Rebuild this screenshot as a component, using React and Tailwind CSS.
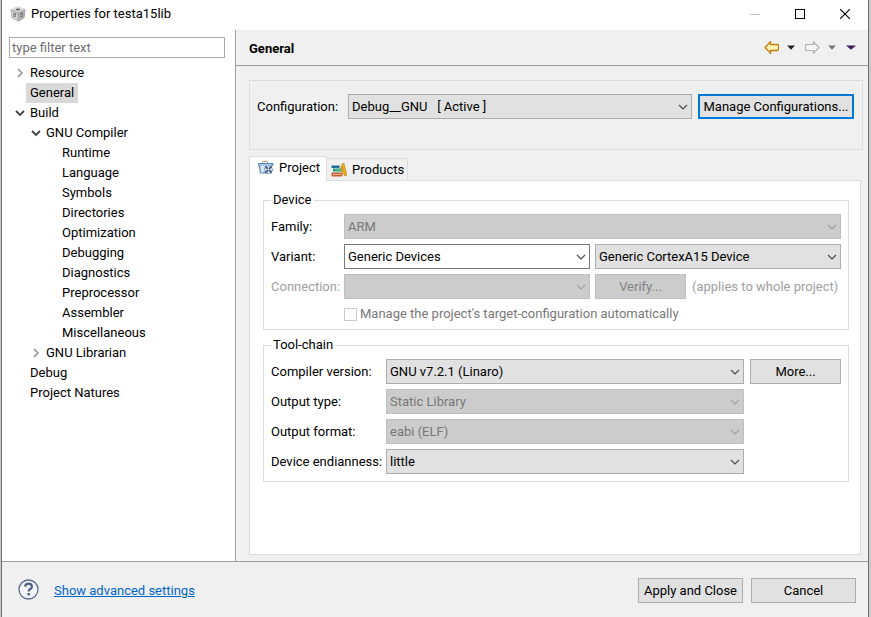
import React, { useState } from 'react';
import clsx from 'clsx';

const tree = [
  { label: 'Resource', level: 0, state: 'closed' },
  { label: 'General', level: 0 },
  { label: 'Build', level: 0, state: 'open' },
  { label: 'GNU Compiler', level: 1, state: 'open' },
  { label: 'Runtime', level: 2 },
  { label: 'Language', level: 2 },
  { label: 'Symbols', level: 2 },
  { label: 'Directories', level: 2 },
  { label: 'Optimization', level: 2 },
  { label: 'Debugging', level: 2 },
  { label: 'Diagnostics', level: 2 },
  { label: 'Preprocessor', level: 2 },
  { label: 'Assembler', level: 2 },
  { label: 'Miscellaneous', level: 2 },
  { label: 'GNU Librarian', level: 1, state: 'closed' },
  { label: 'Debug', level: 0 },
  { label: 'Project Natures', level: 0 },
];

const indents = ['pl-3', 'pl-7', 'pl-11'];

function CubeIcon() {
  return (
    <svg width="16" height="16" viewBox="0 0 16 16" aria-hidden="true">
      <path d="M8 0.5 L15.5 3.5 L14.5 12 L8.5 15.5 L1.5 12 L0.5 3.5 Z" fill="#a2a2a2" />
      <path d="M8 0.5 L15 3.3 L8.3 6.6 L1 3.3 Z" fill="#dedede" />
      <path d="M1 4.3 L7.7 7.4 L8 14.8 L2 11.6 Z" fill="#cdcdcd" />
      <path d="M8.8 7.4 L15 4.3 L14 11.6 L8.9 14.8 Z" fill="#b0b0b0" />
      <ellipse cx="8" cy="3.4" rx="2.4" ry="1" fill="#6a6a6a" />
      <ellipse cx="4.6" cy="9" rx="1.2" ry="2.1" fill="#4a4a4a" />
      <ellipse cx="11.7" cy="9" rx="1.2" ry="2.1" fill="#4a4a4a" />
      <path d="M4 8 L5 10 M11 10 L12.4 8" stroke="#e8e8e8" strokeWidth="0.9" />
    </svg>
  );
}

function ProjectIcon() {
  return (
    <svg width="16" height="14" viewBox="0 0 16 14" aria-hidden="true">
      <path d="M4.5 2.5 V1.2 Q4.5 0.5 5.5 0.5 H8.5 Q9.5 0.5 9.5 1.2 V2.5" fill="none" stroke="#c08a74" />
      <path d="M0.5 2.5 H15 V4.5 H13.5 V12 H2.2 L1.5 4.5 H0.5 Z" fill="#a9cbea" stroke="#5b83b4" />
      <path d="M3 5 H7 L5 11.5 H3.2 Z" fill="#d8e9f8" />
      <circle cx="10.5" cy="8.5" r="4.4" fill="#d3dfec" />
      <circle cx="10.5" cy="8.5" r="3.9" fill="none" stroke="#4d6a8c" strokeWidth="1" strokeDasharray="1.5 1.4" />
      <path d="M7.4 5.4 L13.6 11.6 M13.6 5.4 L7.4 11.6" stroke="#33506f" strokeWidth="1.5" />
      <circle cx="10.5" cy="8.5" r="1" fill="#fff" />
    </svg>
  );
}

function BooksIcon() {
  return (
    <svg width="16" height="14" viewBox="0 0 16 14" aria-hidden="true">
      <rect x="0.5" y="2.5" width="8" height="2.5" fill="#1d6d9c" />
      <rect x="2" y="5.5" width="8.5" height="3" fill="#16966e" />
      <path d="M3.5 7 H10" stroke="#7fd0ac" />
      <rect x="0.5" y="9.5" width="11" height="4" rx="1" fill="#c65c36" />
      <path d="M2 11.5 H10.5" stroke="#f3b595" />
      <path d="M9.4 3 L11.2 2.4 L12.6 12.6 L10.6 9 Z" fill="#d98f10" />
      <path d="M10.8 1 L13 0.4 L15.8 12 L13.6 13 Z" fill="#f2ad1c" stroke="#bd7d0a" strokeWidth="0.6" />
    </svg>
  );
}

function ArrowIcon({ forward }) {
  return (
    <svg width="15" height="13" viewBox="0 0 15 13" aria-hidden="true">
      {forward ? (
        <path d="M14 6.5 L8.5 0.8 V3.5 H1.5 Q0.5 3.5 0.5 4.5 V8.5 Q0.5 9.5 1.5 9.5 H8.5 V12.2 Z" fill="#f5f5f5" stroke="#b2b2b2" strokeWidth="1.2" />
      ) : (
        <path d="M1 6.5 L6.5 0.8 V3.5 H13.5 Q14.5 3.5 14.5 4.5 V8.5 Q14.5 9.5 13.5 9.5 H6.5 V12.2 Z" fill="#fff3b5" stroke="#bd7d12" strokeWidth="1.3" />
      )}
    </svg>
  );
}

function Caret({ className, wide }) {
  return (
    <svg className={className} width={wide ? 10 : 8} height="5" viewBox="0 0 8 5" preserveAspectRatio="none" aria-hidden="true">
      <path d="M0 0.5 H8 L4 4.8 Z" fill="currentColor" />
    </svg>
  );
}

function Twisty({ state }) {
  if (!state) return <span className="w-4" />;
  return (
    <span className="flex w-4 justify-center pr-1">
      {state === 'open' ? (
        <svg width="10" height="10" viewBox="0 0 10 10" aria-hidden="true">
          <path d="M1 3 L5 7 L9 3" fill="none" stroke="#404040" strokeWidth="1.8" />
        </svg>
      ) : (
        <svg width="10" height="10" viewBox="0 0 10 10" aria-hidden="true">
          <path d="M3 1 L7 5 L3 9" fill="none" stroke="#a6a6a6" strokeWidth="1.8" />
        </svg>
      )}
    </span>
  );
}

function Combo({ id, value, label, disabled, editable, className }) {
  return (
    <div className={clsx('relative min-w-0', className)}>
      <select
        id={id}
        aria-label={label}
        disabled={disabled}
        defaultValue={value}
        className={clsx(
          'block h-[25px] w-full appearance-none border pr-6 pl-[3px] whitespace-pre opacity-100 outline-none',
          disabled && 'border-[#bfbfbf] bg-[#cccccc] text-[#787878]',
          !disabled && editable && 'border-[#7a7a7a] bg-white',
          !disabled && !editable && 'border-[#adadad] bg-[#e1e1e1]',
        )}
      >
        <option value={value}>{value}</option>
      </select>
      <svg
        className={clsx('pointer-events-none absolute top-2 right-1', disabled ? 'text-[#a3a3a3]' : 'text-[#4a4a4a]')}
        width="10"
        height="10"
        viewBox="0 0 10 10"
        aria-hidden="true"
      >
        <path d="M1 3 L5 7 L9 3" fill="none" stroke="currentColor" strokeWidth="1.2" />
      </svg>
    </div>
  );
}

function PushButton({ children, className, primary, ...props }) {
  return (
    <button
      type="button"
      className={clsx(
        'h-[25px] shrink-0 bg-[#e1e1e1] text-center whitespace-nowrap disabled:border-[#bfbfbf] disabled:bg-[#cccccc] disabled:text-[#838383]',
        primary ? 'border-2 border-[#0078d7]' : 'border border-[#adadad]',
        className,
      )}
      {...props}
    >
      {children}
    </button>
  );
}

function TitleBar() {
  return (
    <header className="flex h-[30px] items-center bg-white pr-[18px] pb-0.5 pl-2">
      <CubeIcon />
      <h1 className="flex-1 pl-[5px]">Properties for testa15lib</h1>
      <div className="flex items-center gap-[35px]">
        <button type="button" aria-label="Minimize">
          <svg width="10" height="10" viewBox="0 0 10 10">
            <path d="M0 5.5 H10" stroke="#c4c4c4" />
          </svg>
        </button>
        <button type="button" aria-label="Maximize">
          <svg width="10" height="10" viewBox="0 0 10 10">
            <rect x="0.5" y="0.5" width="9" height="9" fill="none" stroke="#000" />
          </svg>
        </button>
        <button type="button" aria-label="Close">
          <svg width="10" height="10" viewBox="0 0 10 10">
            <path d="M0 0 L10 10 M10 0 L0 10" stroke="#000" strokeWidth="1.1" />
          </svg>
        </button>
      </div>
    </header>
  );
}

function Sidebar() {
  const [selected, setSelected] = useState('General');
  return (
    <nav className="w-[234px] shrink-0 border-r border-[#a0a0a0] bg-white pt-[7px]">
      <input
        type="text"
        aria-label="Filter"
        placeholder="type filter text"
        className="mr-2.5 ml-[7px] block h-[21px] w-[216px] border border-[#a5a8ae] px-0.5 outline-none placeholder:text-[#6d6d6d]"
      />
      <ul className="pt-[5px]">
        {tree.map((item) => (
          <li key={item.label} className={clsx('flex h-5 items-center', indents[item.level])}>
            <Twisty state={item.state} />
            <button
              type="button"
              onClick={() => setSelected(item.label)}
              className={clsx('-ml-1 h-5 px-1', selected === item.label && 'bg-[#d9d9d9]')}
            >
              {item.label}
            </button>
          </li>
        ))}
      </ul>
    </nav>
  );
}

function DeviceGroup() {
  return (
    <fieldset className="border border-[#dcdcdc] px-[7px] pb-[5px]">
      <legend className="h-5 px-0.5">Device</legend>
      <div className="grid grid-cols-[73px_1fr] items-center gap-y-[5px] pt-1">
        <label htmlFor="family">Family:</label>
        <Combo id="family" value="ARM" disabled />
        <label htmlFor="variant">Variant:</label>
        <div className="grid grid-cols-2 gap-[5px]">
          <Combo id="variant" value="Generic Devices" editable />
          <Combo label="Device" value="Generic CortexA15 Device" />
        </div>
        <label htmlFor="connection" className="text-[#a0a0a0]">Connection:</label>
        <div className="grid grid-cols-2 gap-[5px]">
          <Combo id="connection" value="" disabled />
          <div className="flex items-center gap-1.5">
            <PushButton disabled className="w-[91px]">Verify...</PushButton>
            <span className="whitespace-nowrap text-[#a0a0a0]">(applies to whole project)</span>
          </div>
        </div>
        <label className="col-start-2 flex h-5 items-center gap-[3px] text-[#787878]">
          <input type="checkbox" disabled className="size-[13px] appearance-none border border-[#cccccc] bg-white" />
          Manage the project's target-configuration automatically
        </label>
      </div>
    </fieldset>
  );
}

function ToolchainGroup() {
  return (
    <fieldset className="border border-[#dcdcdc] px-[7px] pb-[7px]">
      <legend className="h-5 px-0.5">Tool-chain</legend>
      <div className="grid grid-cols-[115px_1fr_91px] items-center gap-y-[5px] pt-1">
        <label htmlFor="compiler">Compiler version:</label>
        <Combo id="compiler" value="GNU v7.2.1 (Linaro)" className="mr-1.5" />
        <PushButton>More...</PushButton>
        <label htmlFor="output-type">Output type:</label>
        <Combo id="output-type" value="Static Library" disabled className="mr-1.5" />
        <label htmlFor="output-format" className="col-start-1">Output format:</label>
        <Combo id="output-format" value="eabi (ELF)" disabled className="mr-1.5" />
        <label htmlFor="endianness" className="col-start-1 whitespace-nowrap">Device endianness:</label>
        <Combo id="endianness" value="little" className="mr-1.5" />
      </div>
    </fieldset>
  );
}

export default function App() {
  return (
    <div className="flex min-h-screen bg-[#cacaca] pr-0.5 pl-px font-['Roboto','Noto_Sans',sans-serif] text-[13px] leading-5 text-black">
      <div className="flex min-w-0 flex-1 flex-col border-x border-[#6f6f6f] bg-[#f0f0f0]">
        <TitleBar />

        <div className="flex flex-1">
          <Sidebar />

          <main className="flex min-w-0 flex-1 flex-col">
            <div className="flex h-9 items-center border-b border-[#a0a0a0] pr-3 pl-[13px]">
              <h2 className="flex-1 pt-0.5 font-bold">General</h2>
              <div className="flex items-center">
                <button type="button" aria-label="Back"><ArrowIcon /></button>
                <button type="button" aria-label="Back history" className="pl-2"><Caret className="text-[#222222]" /></button>
                <button type="button" aria-label="Forward" className="pl-2.5"><ArrowIcon forward /></button>
                <button type="button" aria-label="Forward history" className="pl-2"><Caret className="text-[#777777]" /></button>
                <button type="button" aria-label="View menu" className="pl-2.5"><Caret wide className="text-[#3b1d5e]" /></button>
              </div>
            </div>

            {/* Active build configuration */}
            <section className="mt-3.5 mr-[5px] ml-[13px] flex items-center border border-[#dcdcdc] pt-[13px] pr-2 pb-[30px] pl-[7px]">
              <label htmlFor="configuration" className="w-[91px] shrink-0">Configuration:</label>
              <Combo id="configuration" value={'Debug__GNU\u00a0\u00a0\u00a0[ Active ]'} className="mr-1.5 flex-1" />
              <PushButton primary className="w-[156px]">Manage Configurations...</PushButton>
            </section>

            {/* Tabs */}
            <div role="tablist" className="mt-1.5 ml-[13px] flex items-end">
              <button
                type="button"
                role="tab"
                aria-selected="true"
                className="z-10 -mb-px flex h-[25px] w-[78px] items-center gap-[5px] border border-b-0 border-[#dcdcdc] bg-white pb-0.5 pl-2"
              >
                <ProjectIcon />
                Project
              </button>
              <button
                type="button"
                role="tab"
                aria-selected="false"
                className="flex h-[22px] w-[81px] items-center gap-[5px] border border-b-0 border-l-0 border-[#dcdcdc] pl-1"
              >
                <BooksIcon />
                Products
              </button>
            </div>
            <div role="tabpanel" className="mr-[7px] mb-1.5 ml-[13px] flex flex-1 flex-col gap-[5px] border border-[#dcdcdc] bg-white pt-[9px] pr-[11px] pb-4 pl-[13px]">
              <DeviceGroup />
              <ToolchainGroup />
            </div>
          </main>
        </div>

        <footer className="flex h-14 items-center border-t border-[#a0a0a0] pr-3 pl-4">
          <button type="button" aria-label="Help">
            <svg width="21" height="21" viewBox="0 0 21 21">
              <circle cx="10.5" cy="10.5" r="9.5" fill="#f4f5f8" stroke="#5d6d8c" strokeWidth="1.3" />
              <path d="M7.2 7.6 Q7.3 4.6 10.6 4.6 Q13.9 4.6 13.9 7.4 Q13.9 9 12.2 10 Q10.7 10.9 10.7 12.6" fill="none" stroke="#4d5f84" strokeWidth="2.2" />
              <rect x="9.5" y="14" width="2.4" height="2.4" fill="#4d5f84" />
            </svg>
          </button>
          <a href="#advanced" className="ml-[15px] pt-0.5 text-[#0066cc] underline">Show advanced settings</a>
          <div className="ml-auto flex gap-2 pt-0.5">
            <PushButton className="w-[105px]">Apply and Close</PushButton>
            <PushButton className="w-[105px]">Cancel</PushButton>
          </div>
        </footer>
      </div>
    </div>
  );
}
